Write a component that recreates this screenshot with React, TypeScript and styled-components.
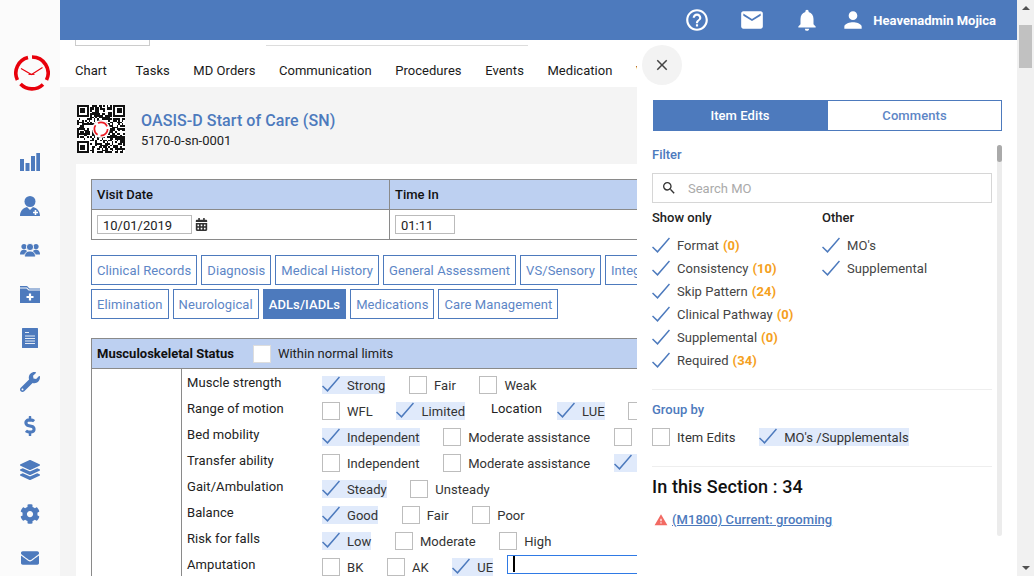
import React from 'react'
import styled, { createGlobalStyle } from 'styled-components'
import {
  MdHelpOutline, MdEmail, MdNotifications, MdPerson, MdClose, MdSearch, MdWarning,
} from 'react-icons/md'
import {
  FaWrench, FaDollarSign, FaLayerGroup, FaCog, FaEnvelope, FaCalendarAlt,
} from 'react-icons/fa'

const BLUE = '#4d7abd'

const GlobalStyle = createGlobalStyle`
  html, body { margin: 0; padding: 0; height: 100%; overflow: hidden; }
  body { font-family: Roboto, "Liberation Sans", sans-serif; font-size: 13px; color: #222; }
  * { box-sizing: border-box; }
`

const Shell = styled.div`
  display: flex;
  width: 1034px;
  height: 576px;
  overflow: hidden;
  background: #fff;
`

// left icon rail
const Sidebar = styled.nav`
  flex: 0 0 60px;
  background: #fbfbfb;
  display: flex;
  flex-direction: column;
  align-items: center;
  padding-top: 55px;
`
const LogoWrap = styled.div`
  height: 36px;
  margin-bottom: 49px;
  margin-right: -3px;
`
const RailList = styled.div`
  display: flex;
  flex-direction: column;
  align-items: center;
`
const RailIcon = styled.div<{ $size?: number }>`
  width: 24px;
  height: 44px;
  display: flex;
  align-items: center;
  justify-content: center;
  color: ${BLUE};
  font-size: ${p => p.$size ?? 20}px;
`

const Main = styled.div`
  flex: 1;
  min-width: 0;
  position: relative;
  display: flex;
  flex-direction: column;
  overflow: hidden;
`
const TopBar = styled.header`
  flex: 0 0 40px;
  background: ${BLUE};
  color: #fff;
  display: flex;
  align-items: center;
  justify-content: flex-end;
  padding-right: 21px;
`
const TopIcon = styled.span<{ $gap: number }>`
  display: flex;
  margin-right: ${p => p.$gap}px;
  font-size: 26px;
`
const UserName = styled.span`
  font-weight: 700;
  font-size: 13px;
`

// nav strip under the top bar
const NavStrip = styled.div`
  flex: 0 0 47px;
  background: #fff;
  display: flex;
  flex-direction: column;
`
const StubRow = styled.div`
  height: 6px;
  display: flex;
  padding-left: 15px;
`
const StubBox = styled.div`
  width: 75px;
  border: 1px solid #ccc;
  border-top: 0;
`
const StubLine = styled.div`
  width: 262px;
  margin-left: 116px;
  border-bottom: 1px solid #ddd;
`
const NavRow = styled.div`
  display: flex;
  padding: 17px 0 0 15px;
  gap: 23.5px;
  white-space: nowrap;
`
const NavItem = styled.span<{ $first?: boolean }>`
  font-size: 13px;
  line-height: 16px;
  letter-spacing: 0.05px;
  color: #1a1a1a;
  margin-right: ${p => (p.$first ? 5 : 0)}px;
`

const Content = styled.div`
  flex: 1;
  background: #f4f4f4;
  padding: 18px 0 0 17px;
  min-height: 0;
`
const DocHeader = styled.div`
  display: flex;
  align-items: center;
  height: 48px;
  margin-bottom: 11px;
`
const DocTitles = styled.div`
  margin-left: 16px;
  padding-top: 4px;
`
const DocTitle = styled.div`
  font-size: 16px;
  font-weight: 500;
  letter-spacing: 0.08px;
  color: ${BLUE};
  line-height: 20px;
`
const DocCode = styled.div`
  font-size: 13px;
  line-height: 20px;
  color: #222;
`
const Card = styled.div`
  background: #fff;
  width: 561px;
  height: 420px;
  margin-left: -1px;
  padding: 15px 0 15px 15px;
  overflow: hidden;
`
const VisitTable = styled.div`
  display: grid;
  grid-template-columns: 298px 1fr;
  border: 1px solid #8a8a8a;
  border-width: 1px 0 1px 1px;
`
const VisitHead = styled.div<{ $last?: boolean }>`
  height: 30px;
  background: #bdd0f1;
  border-bottom: 1px solid #8a8a8a;
  border-right: ${p => (p.$last ? '0' : '1px solid #8a8a8a')};
  padding-left: 5px;
  font-weight: 500;
  font-size: 13px;
  line-height: 29px;
  color: #111;
`
const VisitCell = styled.div<{ $last?: boolean }>`
  height: 29px;
  border-right: ${p => (p.$last ? '0' : '1px solid #8a8a8a')};
  padding-left: 5px;
  display: flex;
  align-items: center;
  gap: 3px;
  font-size: 13px;
  color: #222;
`
const DateBox = styled.div<{ $w: number }>`
  width: ${p => p.$w}px;
  height: 19px;
  border: 1px solid #bbb;
  padding-left: 5px;
  font-size: 13px;
  line-height: 19px;
  color: #222;
`

const PillArea = styled.div`
  margin-top: 15px;
  display: flex;
  flex-direction: column;
  gap: 4px;
`
const PillRow = styled.div`
  display: flex;
  gap: 4px;
  white-space: nowrap;
`
const Pill = styled.div<{ $active?: boolean; $cut?: boolean }>`
  flex: none;
  height: 30px;
  line-height: 29px;
  padding: 0 5px;
  min-width: ${p => (p.$cut ? '60px' : '0')};
  border: 1px solid ${BLUE};
  font-size: 13px;
  letter-spacing: 0.09px;
  color: ${p => (p.$active ? '#fff' : '#5d86c6')};
  background: ${p => (p.$active ? BLUE : '#fff')};
  font-weight: ${p => (p.$active ? 500 : 400)};
`

const Section = styled.div`
  margin-top: 19px;
`
const SectionHead = styled.div`
  height: 31px;
  background: #bdd0f1;
  border: 1px solid #8a8a8a;
  border-width: 1px 0;
  border-left: 1px solid #8a8a8a;
  display: flex;
  align-items: center;
  padding-left: 5px;
  font-size: 13px;
`
const SectionName = styled.span`
  font-weight: 700;
  color: #111;
  margin-right: 19px;
`
const WhiteBox = styled.span`
  width: 18px;
  height: 18px;
  background: #fff;
  border: 1px solid #ddd;
  margin-right: 7px;
`
const SectionBody = styled.div`
  display: grid;
  grid-template-columns: 90px 1fr;
  border-left: 1px solid #8a8a8a;
`
const LeftCell = styled.div`
  border-right: 1px solid #8a8a8a;
`
const Rows = styled.div`
  padding: 3px 0 0 5px;
`
const FormRow = styled.div`
  display: flex;
  height: 26px;
  align-items: center;
  white-space: nowrap;
`
const RowLabel = styled.div`
  width: 135px;
  font-size: 13px;
  letter-spacing: 0.08px;
  color: #222;
  line-height: 20px;
  margin-top: -4px;
`
const InlineLabel = styled(RowLabel)`
  width: auto;
  margin-right: 15px;
`
const OptionWrap = styled.label<{ $checked?: boolean; $gap?: number }>`
  display: inline-flex;
  align-items: center;
  height: 18px;
  margin-right: ${p => p.$gap ?? 23.6}px;
  background: ${p => (p.$checked ? '#e0eafb' : 'transparent')};
  font-size: 13px;
  letter-spacing: 0.05px;
  color: #333;
`
const Box = styled.span<{ $checked?: boolean }>`
  flex: 0 0 18px;
  width: 18px;
  height: 18px;
  margin-right: 7px;
  border: ${p => (p.$checked ? '0' : '1px solid #bdbdbd')};
  background: ${p => (p.$checked ? 'transparent' : '#fff')};
  display: flex;
`
const TextInput = styled.div`
  width: 200px;
  height: 19px;
  margin-top: -6px;
  border: 1px solid #2f7ae5;
  border-right: 0;
  padding-left: 5px;
  display: flex;
  align-items: center;
`
const Caret = styled.span`
  width: 1.5px;
  height: 16px;
  background: #000;
`

// slide-over panel
const Panel = styled.aside`
  position: absolute;
  top: 40px;
  left: 577px;
  right: 0;
  bottom: 0;
  background: #fff;
  padding: 60px 15px 0 15px;
`
const CloseBtn = styled.div`
  position: absolute;
  left: 5px;
  top: 5px;
  width: 40px;
  height: 40px;
  border-radius: 50%;
  background: #f3f3f3;
  color: #444;
  font-size: 18px;
  display: flex;
  align-items: center;
  justify-content: center;
`
const TabBar = styled.div`
  display: grid;
  grid-template-columns: 174px 175px;
  height: 30px;
  margin: 0 0 0 1px;
  width: 349px;
`
const Tab = styled.div<{ $active?: boolean }>`
  border: 1px solid ${BLUE};
  background: ${p => (p.$active ? BLUE : '#fff')};
  color: ${p => (p.$active ? '#fff' : '#5d86c6')};
  text-align: center;
  line-height: 29px;
  font-size: 13px;
  font-weight: 500;
  letter-spacing: 0.08px;
`
const PanelBody = styled.div`
  position: relative;
  margin-top: 15px;
  height: 391px;
  padding: 1px 10px 0 0;
`
const InnerTrack = styled.div`
  position: absolute;
  right: 0;
  top: 0;
  bottom: 0;
  width: 5px;
  background: #ececec;
  border-radius: 3px;
`
const InnerThumb = styled.div`
  width: 5px;
  height: 17px;
  background: #aaa;
  border-radius: 3px;
`
const BlueHeading = styled.div<{ $top?: number }>`
  color: ${BLUE};
  font-weight: 500;
  font-size: 13px;
  line-height: 18px;
  margin-top: ${p => p.$top ?? 0}px;
`
const SearchBox = styled.div`
  margin-top: 9px;
  height: 30px;
  border: 1px solid #d6d6d6;
  display: flex;
  align-items: center;
  padding-left: 8px;
  color: #333;
  font-size: 16px;
  gap: 11px;
`
const SearchHint = styled.span`
  color: #aaa;
  font-size: 13px;
`
const FilterCols = styled.div`
  display: grid;
  grid-template-columns: 170px 1fr;
  margin-top: 6px;
`
const ColTitle = styled.div`
  font-weight: 500;
  font-size: 13px;
  line-height: 18px;
  color: #222;
  margin-bottom: 7px;
`
const CheckRow = styled.div`
  display: flex;
  align-items: center;
  height: 23px;
  color: #444;
  font-size: 13px;
  letter-spacing: 0.05px;
  white-space: nowrap;
`
const Count = styled.span`
  color: #f5a020;
  font-weight: 700;
  margin-left: 4px;
`
const Divider = styled.div<{ $top: number }>`
  height: 1px;
  background: #eee;
  margin-top: ${p => p.$top}px;
`
const GroupRow = styled.div`
  display: flex;
  margin-top: 9px;
`
const SectionCount = styled.div`
  margin-top: 9px;
  font-size: 18px;
  font-weight: 500;
  letter-spacing: 0.1px;
  line-height: 22px;
  color: #111;
`
const ItemLink = styled.div`
  margin-top: 14px;
  display: flex;
  align-items: center;
  gap: 4px;
  font-size: 13px;
  font-weight: 500;
  letter-spacing: 0.05px;
  color: ${BLUE};
  text-decoration: underline;
  padding-left: 2px;
`
const WarnIcon = styled.span`
  display: flex;
  color: #f26a63;
  font-size: 14px;
`

// page scrollbar
const PageScroll = styled.div`
  flex: 0 0 17px;
  background: #f1f1f1;
  display: flex;
  flex-direction: column;
  align-items: center;
  justify-content: space-between;
  padding: 6px 0;
  position: relative;
`
const Arrow = styled.span<{ $down?: boolean }>`
  width: 0;
  height: 0;
  border-left: 4px solid transparent;
  border-right: 4px solid transparent;
  ${p => (p.$down ? 'border-top: 4px solid #505050;' : 'border-bottom: 4px solid #505050;')}
`
const PageThumb = styled.div`
  position: absolute;
  left: 2px;
  top: 25px;
  width: 13px;
  height: 43px;
  background: #c1c1c1;
`

const Tick = () => (
  <svg width="18" height="18" viewBox="0 0 18 18">
    <path d="M0.5 10 L5.5 14.8 L17.5 1" fill="none" stroke={BLUE} strokeWidth="1.5" />
  </svg>
)

const Option: React.FC<{ label?: string; checked?: boolean; gap?: number }> = ({ label, checked, gap }) => (
  <OptionWrap $checked={checked} $gap={gap}>
    <Box $checked={checked}>{checked && <Tick />}</Box>
    {label}
  </OptionWrap>
)

const Logo = () => (
  <svg width="36" height="36" viewBox="0 0 36 36" fill="none">
    <g stroke="#e8000b" strokeWidth="3.6">
      <path d="M14 2.6 A16 16 0 0 0 3.4 25" />
      <path d="M6.5 29 A16 16 0 0 0 29 29.5" />
      <path d="M32.5 25 A16 16 0 0 0 18 2" />
    </g>
    <path d="M7 13.5 L17.5 19.5 L28.5 12.5" stroke="#e8000b" strokeWidth="1.1" />
    <path d="M14.5 19.5 L20.5 19.5" stroke="#e8000b" strokeWidth="0.9" />
  </svg>
)

const BarsIcon = () => (
  <svg width="20" height="18" viewBox="0 0 20 18" fill={BLUE}>
    <rect x="0" y="6" width="4" height="12" />
    <rect x="5.5" y="10" width="4" height="8" />
    <rect x="11" y="3" width="4" height="15" />
    <rect x="16.3" y="0" width="3.7" height="18" />
  </svg>
)

const ClinicianIcon = () => (
  <svg width="20" height="20" viewBox="0 0 20 20">
    <circle cx="10" cy="5.5" r="5.5" fill={BLUE} />
    <path d="M0 20 C0 14.5 3.5 12 7 11 L10 14 L13 11 C16.5 12 20 14.5 20 20 Z" fill={BLUE} />
    <path d="M13 16.5h5M15.5 14v5" stroke="#fff" strokeWidth="1.6" />
  </svg>
)

const TeamIcon = () => (
  <svg width="20" height="14" viewBox="0 0 20 14" fill={BLUE}>
    <circle cx="4" cy="3.6" r="2.6" />
    <circle cx="16" cy="3.6" r="2.6" />
    <path d="M0 11.5 C0 8 2 6.8 4 6.8 C6 6.8 8 8 8 11.5 Z" />
    <path d="M12 11.5 C12 8 14 6.8 16 6.8 C18 6.8 20 8 20 11.5 Z" />
    <circle cx="10" cy="4" r="3.6" stroke="#fbfbfb" strokeWidth="0.9" />
    <path d="M4.5 14 C4.5 9.5 7 8 10 8 C13 8 15.5 9.5 15.5 14 Z" stroke="#fbfbfb" strokeWidth="0.9" />
  </svg>
)

const FolderIcon = () => (
  <svg width="20" height="17" viewBox="0 0 20 17">
    <path d="M0 0 H7 L9.5 2.5 H20 V3.6 H9 L7 1.4 H0 Z" fill={BLUE} />
    <path d="M0 2.4 H6.5 L8.6 4.6 H20 V17 H0 Z" fill={BLUE} />
    <path d="M6.5 11h7M10 7.5v7" stroke="#fff" strokeWidth="2.2" />
  </svg>
)

const DocIcon = () => (
  <svg width="16" height="20" viewBox="0 0 16 20">
    <rect width="16" height="20" rx="0.5" fill={BLUE} />
    <path d="M3 4.5h4M3 8h10M3 10.5h10M3 13h10M3 15.5h10" stroke="#fff" strokeWidth="1" opacity="0.85" />
  </svg>
)

// finder squares plus a fixed scatter of modules for the qr code
const qrSize = 29
const inFinder = (x: number, y: number) =>
  (x < 8 && y < 8) || (x > 20 && y < 8) || (x < 8 && y > 20)
const qrCells: [number, number][] = []
for (let y = 0; y < qrSize; y++) {
  for (let x = 0; x < qrSize; x++) {
    if (inFinder(x, y)) continue
    const v = Math.sin(x * 12.9898 + y * 78.233) * 43758.5453
    if (v - Math.floor(v) > 0.48) qrCells.push([x, y])
  }
}
const Finder: React.FC<{ x: number; y: number }> = ({ x, y }) => (
  <>
    <rect x={x} y={y} width="7" height="7" fill="#111" />
    <rect x={x + 1} y={y + 1} width="5" height="5" fill="#fff" />
    <rect x={x + 2} y={y + 2} width="3" height="3" fill="#111" />
  </>
)
const QrCode = () => (
  <svg width="48" height="48" viewBox="0 0 29 29" shapeRendering="crispEdges">
    <rect width="29" height="29" fill="#fff" />
    {qrCells.map(([x, y]) => <rect key={`${x}-${y}`} x={x} y={y} width="1" height="1" fill="#111" />)}
    <Finder x={0} y={0} />
    <Finder x={22} y={0} />
    <Finder x={0} y={22} />
    <g shapeRendering="auto">
      <circle cx="14.5" cy="14.5" r="5.4" fill="#fff" />
      <circle cx="14.5" cy="14.5" r="4" fill="none" stroke="#ee1c25" strokeWidth="1" strokeDasharray="6.5 1.9" />
    </g>
  </svg>
)

const navItems = ['Tasks', 'MD Orders', 'Communication', 'Procedures', 'Events', 'Medication', 'V']
const pillsTop = ['Clinical Records', 'Diagnosis', 'Medical History', 'General Assessment', 'VS/Sensory']
const pillsBottom = ['Elimination', 'Neurological', 'ADLs/IADLs', 'Medications', 'Care Management']
const showOnly: [string, number][] = [
  ['Format', 0], ['Consistency', 10], ['Skip Pattern', 24], ['Clinical Pathway', 0], ['Supplemental', 0], ['Required', 34],
]

const App: React.FC = () => (
  <Shell>
    <GlobalStyle />
    <Sidebar>
      <LogoWrap><Logo /></LogoWrap>
      <RailList>
        <RailIcon><BarsIcon /></RailIcon>
        <RailIcon><ClinicianIcon /></RailIcon>
        <RailIcon><TeamIcon /></RailIcon>
        <RailIcon><FolderIcon /></RailIcon>
        <RailIcon><DocIcon /></RailIcon>
        <RailIcon><FaWrench /></RailIcon>
        <RailIcon><FaDollarSign /></RailIcon>
        <RailIcon><FaLayerGroup /></RailIcon>
        <RailIcon><FaCog /></RailIcon>
        <RailIcon $size={18}><FaEnvelope /></RailIcon>
      </RailList>
    </Sidebar>

    <Main>
      <TopBar>
        <TopIcon $gap={29}><MdHelpOutline /></TopIcon>
        <TopIcon $gap={29}><MdEmail /></TopIcon>
        <TopIcon $gap={20}><MdNotifications /></TopIcon>
        <TopIcon $gap={7}><MdPerson /></TopIcon>
        <UserName>Heavenadmin Mojica</UserName>
      </TopBar>

      <NavStrip>
        <StubRow><StubBox /><StubLine /></StubRow>
        <NavRow>
          <NavItem $first>Chart</NavItem>
          {navItems.map(n => <NavItem key={n}>{n}</NavItem>)}
        </NavRow>
      </NavStrip>

      <Content>
        <DocHeader>
          <QrCode />
          <DocTitles>
            <DocTitle>OASIS-D Start of Care (SN)</DocTitle>
            <DocCode>5170-0-sn-0001</DocCode>
          </DocTitles>
        </DocHeader>

        <Card>
          <VisitTable>
            <VisitHead>Visit Date</VisitHead>
            <VisitHead $last>Time In</VisitHead>
            <VisitCell>
              <DateBox $w={95}>10/01/2019</DateBox>
              <FaCalendarAlt size={13} color="#333" />
            </VisitCell>
            <VisitCell $last><DateBox $w={60}>01:11</DateBox></VisitCell>
          </VisitTable>

          <PillArea>
            <PillRow>
              {pillsTop.map(p => <Pill key={p}>{p}</Pill>)}
              <Pill $cut>Integ</Pill>
            </PillRow>
            <PillRow>{pillsBottom.map(p => <Pill key={p} $active={p === 'ADLs/IADLs'}>{p}</Pill>)}</PillRow>
          </PillArea>

          <Section>
            <SectionHead>
              <SectionName>Musculoskeletal Status</SectionName>
              <WhiteBox />
              Within normal limits
            </SectionHead>
            <SectionBody>
              <LeftCell />
              <Rows>
                <FormRow>
                  <RowLabel>Muscle strength</RowLabel>
                  <Option label="Strong" checked />
                  <Option label="Fair" />
                  <Option label="Weak" />
                </FormRow>
                <FormRow>
                  <RowLabel>Range of motion</RowLabel>
                  <Option label="WFL" />
                  <Option label="Limited" checked gap={26} />
                  <InlineLabel>Location</InlineLabel>
                  <Option label="LUE" checked />
                  <Option />
                </FormRow>
                <FormRow>
                  <RowLabel>Bed mobility</RowLabel>
                  <Option label="Independent" checked />
                  <Option label="Moderate assistance" />
                  <Option />
                </FormRow>
                <FormRow>
                  <RowLabel>Transfer ability</RowLabel>
                  <Option label="Independent" />
                  <Option label="Moderate assistance" />
                  <Option checked />
                </FormRow>
                <FormRow>
                  <RowLabel>Gait/Ambulation</RowLabel>
                  <Option label="Steady" checked />
                  <Option label="Unsteady" />
                </FormRow>
                <FormRow>
                  <RowLabel>Balance</RowLabel>
                  <Option label="Good" checked />
                  <Option label="Fair" />
                  <Option label="Poor" />
                </FormRow>
                <FormRow>
                  <RowLabel>Risk for falls</RowLabel>
                  <Option label="Low" checked />
                  <Option label="Moderate" />
                  <Option label="High" />
                </FormRow>
                <FormRow>
                  <RowLabel>Amputation</RowLabel>
                  <Option label="BK" />
                  <Option label="AK" />
                  <Option label="UE" checked gap={14} />
                  <TextInput><Caret /></TextInput>
                </FormRow>
              </Rows>
            </SectionBody>
          </Section>
        </Card>
      </Content>

      <Panel>
        <CloseBtn><MdClose /></CloseBtn>
        <TabBar>
          <Tab $active>Item Edits</Tab>
          <Tab>Comments</Tab>
        </TabBar>
        <PanelBody>
          <InnerTrack><InnerThumb /></InnerTrack>
          <BlueHeading>Filter</BlueHeading>
          <SearchBox><MdSearch /><SearchHint>Search MO</SearchHint></SearchBox>
          <FilterCols>
            <div>
              <ColTitle>Show only</ColTitle>
              {showOnly.map(([name, n]) => (
                <CheckRow key={name}>
                  <Box $checked><Tick /></Box>
                  {name}<Count>({n})</Count>
                </CheckRow>
              ))}
            </div>
            <div>
              <ColTitle>Other</ColTitle>
              <CheckRow><Box $checked><Tick /></Box>MO's</CheckRow>
              <CheckRow><Box $checked><Tick /></Box>Supplemental</CheckRow>
            </div>
          </FilterCols>
          <Divider $top={17} />
          <BlueHeading $top={11}>Group by</BlueHeading>
          <GroupRow>
            <Option label="Item Edits" />
            <Option label="MO's /Supplementals" checked />
          </GroupRow>
          <Divider $top={20} />
          <SectionCount>In this Section : 34</SectionCount>
          <ItemLink>
            <WarnIcon><MdWarning /></WarnIcon>
            (M1800) Current: grooming
          </ItemLink>
        </PanelBody>
      </Panel>
    </Main>

    <PageScroll>
      <Arrow />
      <PageThumb />
      <Arrow $down />
    </PageScroll>
  </Shell>
)

export default App
